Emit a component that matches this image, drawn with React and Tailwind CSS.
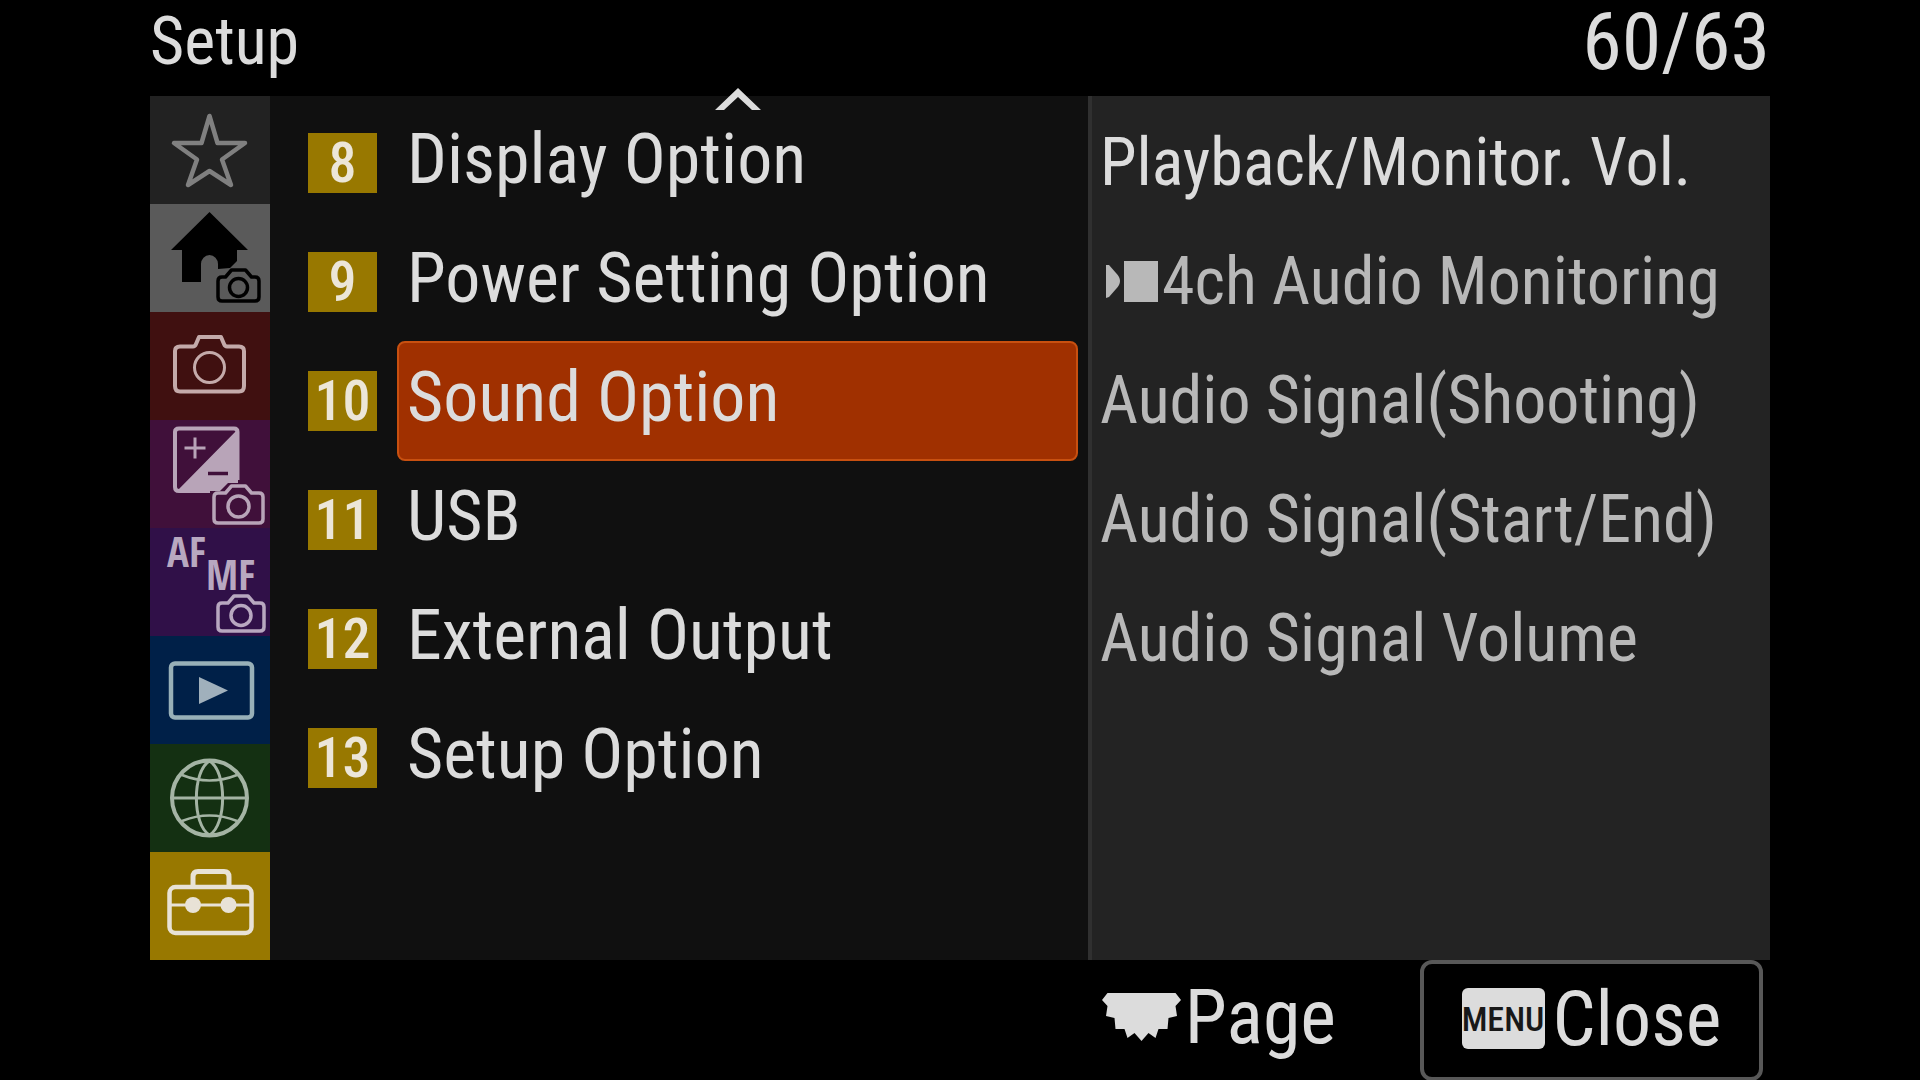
import React, { useState } from 'react';
import clsx from 'clsx';

function StarIcon() {
  return (
    <path
      d="M59.5 20 L67.5 47 H95 L72 63.5 L81 89 L59.5 75 L38 89 L47 63.5 L24 47 H51.5 Z"
      fill="none" stroke="#808080" strokeWidth="4.5" strokeLinejoin="round"
    />
  );
}

function SmallCamera({ x, y, w = 46, h = 36, r = 10, color }) {
  const c = x + w / 2;
  const top = y + 7;
  const bottom = y + h;
  return (
    <g fill="none" stroke={color} strokeWidth="3.5" strokeLinejoin="round">
      <path
        d={`M${x + 4} ${top} H${c - 13} L${c - 7} ${y} H${c + 7} L${c + 13} ${top} H${x + w - 4} Q${x + w} ${top} ${x + w} ${top + 4} V${bottom - 4} Q${x + w} ${bottom} ${x + w - 4} ${bottom} H${x + 4} Q${x} ${bottom} ${x} ${bottom - 4} V${top + 4} Q${x} ${top} ${x + 4} ${top} Z`}
      />
      <circle cx={c} cy={y + h / 2 + 2} r={r} />
    </g>
  );
}

function HomeIcon() {
  return (
    <>
      <path d="M59.5 8 L98 46 H87 V57 L80 64 L68 65 V60 A8.5 9 0 0 0 51 60 V78 H32 V46 H21 Z" fill="#000" />
      <SmallCamera x={68} y={66} w={41} h={31} r={9} color="#000" />
    </>
  );
}

function CameraIcon() {
  return (
    <g fill="none" stroke="#c4aaaa" strokeLinejoin="round">
      <path
        d="M30 34.5 H43 Q45 34.5 46 32 L49 25 H71 L74 32 Q75 34.5 77 34.5 H89 Q94 34.5 94 39 V74 Q94 79.5 89 79.5 H30 Q25 79.5 25 74 V39 Q25 34.5 30 34.5 Z"
        strokeWidth="4"
      />
      <circle cx="59.5" cy="55.5" r="15" strokeWidth="3" />
    </g>
  );
}

function ExposureIcon() {
  return (
    <>
      <path d="M88 9 V63 L78 63 L70 71 H27 Z" fill="#b8a4b8" />
      <path d="M60 71 H29 Q25 71 25 67 V12 Q25 8.5 29 8.5 H84 Q87.5 8.5 87.5 12 V60" fill="none" stroke="#b8a4b8" strokeWidth="4" />
      <path d="M34.5 28 H55.5 M45 17.5 V38.5" stroke="#b8a4b8" strokeWidth="3" />
      <path d="M58 53.5 H78" stroke="#40103a" strokeWidth="3.5" />
      <SmallCamera x={64} y={66} w={49} h={37} r={10.5} color="#b8a4b8" />
    </>
  );
}

function FocusIcon() {
  return (
    <>
      <g fill="#b8a8c0" fontFamily='"Open Sans Condensed", "Roboto Condensed", sans-serif' fontWeight="700" fontSize="41">
        <text x="17" y="39">AF</text>
        <text x="56" y="62">MF</text>
      </g>
      <SmallCamera x={68} y={68} w={46} h={35} r={10} color="#b8a8c0" />
    </>
  );
}

function PlaybackIcon() {
  return (
    <>
      <rect x="21" y="27.5" width="81" height="54" rx="4" fill="none" stroke="#98b0b8" strokeWidth="4.5" />
      <path d="M49 41 L78 54.5 L49 68 Z" fill="#a0b0bc" />
    </>
  );
}

function NetworkIcon() {
  return (
    <g fill="none" stroke="#a4b4a4">
      <circle cx="59.5" cy="54" r="37.5" strokeWidth="4" />
      <path d="M59.5 17 C42 27 42 81 59.5 91 C77 81 77 27 59.5 17" strokeWidth="3" />
      <path d="M22 54 H97" strokeWidth="3" />
      <path d="M32 31 Q59.5 42 87 31 M32 77 Q59.5 66 87 77" strokeWidth="2.5" />
    </g>
  );
}

function ToolboxIcon() {
  return (
    <g stroke="#e8e2d6" fill="none">
      <rect x="19.5" y="35" width="82" height="46" rx="6" strokeWidth="4.5" />
      <path d="M43 34 V25 Q43 19.5 48 19.5 H74 Q79 19.5 79 25 V34" strokeWidth="5" />
      <path d="M20 53 H101" strokeWidth="3" />
      <circle cx="43" cy="53" r="8" fill="#e8e2d6" stroke="none" />
      <circle cx="78.5" cy="53" r="8" fill="#e8e2d6" stroke="none" />
    </g>
  );
}

const TABS = [
  { id: 'my', label: 'My Menu', bg: 'bg-[#222222]', Icon: StarIcon },
  { id: 'main', label: 'Main', bg: 'bg-[#5a5a5a]', Icon: HomeIcon },
  { id: 'shooting', label: 'Shooting', bg: 'bg-[#401010]', Icon: CameraIcon },
  { id: 'exposure', label: 'Exposure/Color', bg: 'bg-[#40103a]', Icon: ExposureIcon },
  { id: 'focus', label: 'Focus', bg: 'bg-[#301048]', Icon: FocusIcon },
  { id: 'playback', label: 'Playback', bg: 'bg-[#002048]', Icon: PlaybackIcon },
  { id: 'network', label: 'Network', bg: 'bg-[#143012]', Icon: NetworkIcon },
  { id: 'setup', label: 'Setup', bg: 'bg-[#987800]', Icon: ToolboxIcon },
];

const GROUPS = [
  { no: 8, name: 'Display Option' },
  { no: 9, name: 'Power Setting Option' },
  { no: 10, name: 'Sound Option' },
  { no: 11, name: 'USB' },
  { no: 12, name: 'External Output' },
  { no: 13, name: 'Setup Option' },
];

const ITEMS = [
  { name: 'Playback/Monitor. Vol.', active: true },
  { name: '4ch Audio Monitoring', movie: true },
  { name: 'Audio Signal(Shooting)' },
  { name: 'Audio Signal(Start/End)' },
  { name: 'Audio Signal Volume' },
];

function MovieIcon() {
  return (
    <svg viewBox="0 0 52 42" className="mr-1 ml-[6px] h-[42px] w-[52px] shrink-0" fill="#b8b8b8" aria-hidden="true">
      <path d="M0 4 L3 4 L10 12 Q14 16 14 20 Q14 24 10 28 L3 36 L0 37 Z" />
      <rect x="18" y="0" width="34" height="41" />
    </svg>
  );
}

function DialIcon() {
  return (
    <svg viewBox="0 0 79 48" className="h-12 w-[79px]" fill="#dcdcdc" aria-hidden="true">
      <path d="M5.5 0 H73.5 L79 7 L73.5 13 L75 23 L66.5 25 L65.5 36 L56.5 36 L53.5 45 L46.5 40 L39.5 48 L32.5 40 L25.5 45 L22.5 36 L13.5 36 L12.5 25 L4 23 L5.5 13 L0 7 Z" />
    </svg>
  );
}

export default function App() {
  const [selected, setSelected] = useState(10);

  return (
    <div className="flex min-h-screen flex-col bg-black px-[150px] font-['Roboto_Condensed','Liberation_Sans',sans-serif] text-[#dcdcdc]">
      <header className="flex h-24 items-center justify-between pb-3 leading-tight">
        <h1 className="text-[66px]">Setup</h1>
        <span className="text-[80px]">60/63</span>
      </header>

      <main className="flex flex-1">
        <nav className="flex w-[120px] shrink-0 flex-col">
          {TABS.map(({ id, label, bg, Icon }) => (
            <button key={id} type="button" aria-label={label} className={clsx('flex flex-1 items-center justify-center', bg)}>
              <svg viewBox="0 0 120 108" className="h-[108px] w-[120px]" aria-hidden="true">
                <Icon />
              </svg>
            </button>
          ))}
        </nav>

        <section className="relative flex flex-[770] flex-col bg-[#101010] pt-[7px] pr-[10px] pb-[142px] pl-[38px]">
          {/* scroll-up marker */}
          <svg viewBox="0 0 46 22" className="absolute -top-2 right-[327px] h-[22px] w-[46px]" aria-hidden="true">
            <path d="M23 0 L46 22 H37 L23 9 L9 22 H0 Z" fill="#dcdcdc" />
          </svg>
          {GROUPS.map((g) => (
            <div key={g.no} className="flex flex-1 items-center gap-5">
              <span className="flex h-[60px] w-[69px] shrink-0 items-center justify-center bg-[#987800] text-[56px] leading-none font-medium text-[#ece6d8]">
                {g.no}
              </span>
              <button
                type="button"
                onClick={() => setSelected(g.no)}
                className={clsx(
                  'flex flex-1 items-center self-stretch rounded-lg border-2 px-2 pb-2 text-left text-[70px] leading-none whitespace-nowrap',
                  selected === g.no ? 'border-[#c85010] bg-[#a03000]' : 'border-transparent'
                )}
              >
                {g.name}
              </button>
            </div>
          ))}
        </section>

        <section className="flex flex-[670] flex-col border-l-4 border-[#303030] bg-[#232323] pt-[7px] pb-[142px] pl-2">
          {ITEMS.map((item) => (
            <button
              key={item.name}
              type="button"
              className={clsx(
                'flex flex-1 items-center text-left text-[66px] leading-none whitespace-nowrap',
                item.active ? 'text-[#dcdcdc]' : 'text-[#b8b8b8]'
              )}
            >
              {item.movie && <MovieIcon />}
              {item.name}
            </button>
          ))}
          <div className="flex-1" />
        </section>
      </main>

      <footer className="flex h-[121px] items-stretch justify-end gap-[84px] pr-[7px] text-[76px] leading-none">
        <div className="flex items-center gap-1 pb-2">
          <DialIcon />
          <span>Page</span>
        </div>
        <button type="button" className="flex w-[343px] items-center justify-center gap-2 rounded-xl border-4 border-[#585858] pb-1">
          <span className="flex h-[61px] w-[83px] items-center justify-center rounded-md bg-[#dcdcdc] text-[34px] leading-none font-medium text-[#181818]">
            MENU
          </span>
          <span>Close</span>
        </button>
      </footer>
    </div>
  );
}
